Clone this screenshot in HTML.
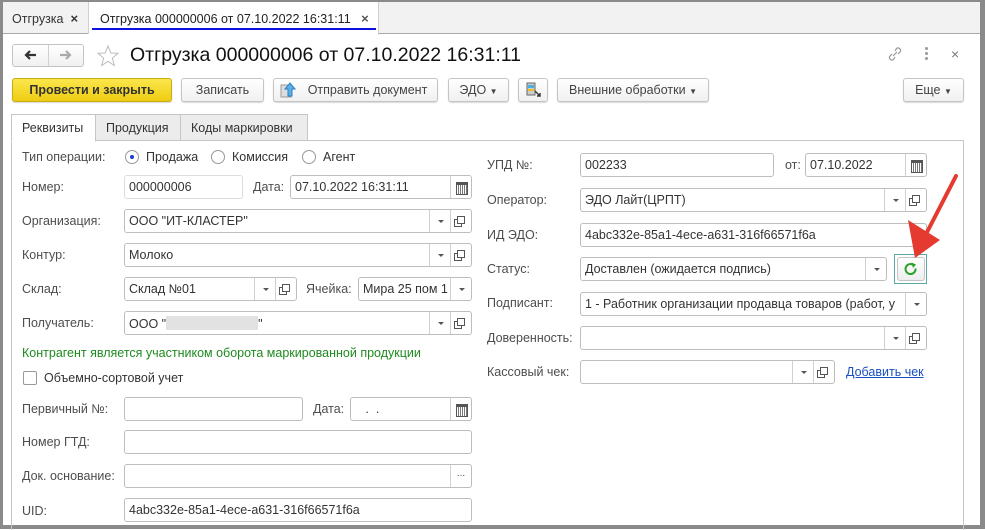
<!DOCTYPE html><html><head><meta charset="utf-8"><style>
*{box-sizing:border-box;margin:0;padding:0}
body{width:985px;height:529px;overflow:hidden;background:#fff;font-family:"Liberation Sans",Arial,sans-serif;font-size:12.5px;color:#333;position:relative}
.a{position:absolute;white-space:nowrap}
.l{position:absolute;color:#4d4d4d;font-size:12.5px;white-space:nowrap}
.f{position:absolute;border:1px solid #bdbdbd;border-radius:3px;background:#fff;height:24px;padding:4px 0 0 4px;color:#333;white-space:nowrap;overflow:hidden}
.sb{position:absolute;top:0;bottom:0;border-left:1px solid #d0d0d0;width:21px}
.dd::after{content:"";position:absolute;left:8px;top:10px;border:3px solid transparent;border-top:3px solid #555}
.op::after{content:"";position:absolute;left:6px;top:6px;width:6px;height:6px;border:1px solid #555;box-shadow:-3px 3px 0 -1px #fff,-3px 3px 0 0 #555}
.cal::after{content:"";position:absolute;left:5px;top:6px;width:10px;height:9px;border:1px solid #555;border-top-width:3px;background:repeating-linear-gradient(90deg,#fff 0 1px,#777 1px 2px)}
.btn{position:absolute;top:78px;height:24px;border:1px solid #c4c4c4;border-radius:3px;background:linear-gradient(#fff,#f0f0f0);box-shadow:0 1px 1px rgba(0,0,0,.15);color:#444;text-align:center;line-height:22px;font-size:12.5px}
.tab{position:absolute;top:114px;height:27px;border:1px solid #c6c6c6;background:#ececec;padding:6px 0 0 10px;color:#333}
.rad{position:absolute;width:14px;height:14px;border:1px solid #999;border-radius:50%;background:#fff}
</style></head><body>
<div class="a" style="left:0;top:0;width:985px;height:34px;background:#f2f2f2;border-bottom:1px solid #aaa"></div>
<div class="a" style="left:0;top:0;width:3px;height:529px;background:#8a8a8a"></div>
<div class="a" style="left:980px;top:0;width:5px;height:529px;background:#8a8a8a"></div>
<div class="a" style="left:0;top:525px;width:985px;height:4px;background:#8a8a8a"></div>
<div class="a" style="left:0;top:0;width:985px;height:2px;background:#8a8a8a"></div>
<div class="a" style="left:12px;top:11px;color:#333">Отгрузка&nbsp;&nbsp;<b style="font-size:13px">×</b></div>
<div class="a" style="left:88px;top:2px;width:1px;height:32px;background:#d0d0d0"></div>
<div class="a" style="left:89px;top:2px;width:290px;height:33px;background:#fff;border-right:1px solid #d0d0d0"></div>
<div class="a" style="left:100px;top:11px;color:#222">Отгрузка 000000006 от 07.10.2022 16:31:11&nbsp;&nbsp;&nbsp;<b style="font-size:13px;color:#555">×</b></div>
<div class="a" style="left:92px;top:28px;width:284px;height:2px;background:#1010e0"></div>
<div class="a" style="left:12px;top:44px;width:72px;height:23px;border:1px solid #c4c4c4;border-radius:3px;background:linear-gradient(#fff,#f0f0f0)"></div>
<div class="a" style="left:48px;top:45px;width:1px;height:21px;background:#d0d0d0"></div>
<svg class="a" style="left:22px;top:48px" width="16" height="14"><path d="M14 7 H4 M8 3 L4 7 L8 11" fill="none" stroke="#333" stroke-width="2.2"/></svg>
<svg class="a" style="left:58px;top:48px" width="16" height="14"><path d="M2 7 H12 M8 3 L12 7 L8 11" fill="none" stroke="#aaa" stroke-width="2.2"/></svg>
<svg class="a" style="left:96px;top:44px" width="24" height="24"><polygon points="12,2 14.8,9 22,9.3 16.4,14 18.3,21.5 12,17.3 5.7,21.5 7.6,14 2,9.3 9.2,9" fill="none" stroke="#bbb"/></svg>
<div class="a" style="left:130px;top:44px;font-size:19.5px;color:#111">Отгрузка 000000006 от 07.10.2022 16:31:11</div>
<svg class="a" style="left:887px;top:46px" width="16" height="16"><path d="M6 10 L10 6 M5 8 L3 10 a2.5 2.5 0 0 0 3.5 3.5 L8 11 M11 8 L13 6 a2.5 2.5 0 0 0 -3.5 -3.5 L8 5" fill="none" stroke="#999" stroke-width="1.2"/></svg>
<div class="a" style="left:925px;top:47px;width:3px;height:3px;border-radius:50%;background:#999;box-shadow:0 5px 0 #999,0 10px 0 #999"></div>
<div class="a" style="left:951px;top:46px;color:#777;font-size:14px">×</div>
<div class="btn" style="left:12px;width:160px;background:linear-gradient(#fbe64b,#efcc12);border-color:#c9ac10;font-weight:bold;color:#333">Провести и закрыть</div>
<div class="btn" style="left:181px;width:83px">Записать</div>
<div class="btn" style="left:273px;width:165px;padding-left:24px">Отправить документ</div>
<svg class="a" style="left:280px;top:82px" width="16" height="16"><rect x="1" y="3" width="10" height="12" fill="#ddd" stroke="#999"/><path d="M8 14 V7 H5 L10 1 L15 7 H12 V14Z" fill="#5ab0e8" stroke="#2c7fc0"/></svg>
<div class="btn" style="left:448px;width:61px">ЭДО <span style="font-size:8px">▼</span></div>
<div class="btn" style="left:518px;width:30px"></div>
<svg class="a" style="left:524px;top:81px" width="18" height="18"><rect x="3" y="2" width="8" height="12" fill="#ccc" stroke="#666"/><rect x="4" y="4" width="6" height="3" fill="#4ab0ea"/><rect x="4" y="8" width="6" height="2" fill="#f0c020"/><path d="M11 10 L16 15 M16 12 V15 H13" stroke="#333" fill="none" stroke-width="1.4"/></svg>
<div class="btn" style="left:557px;width:152px">Внешние обработки <span style="font-size:8px">▼</span></div>
<div class="btn" style="left:903px;width:61px">Еще <span style="font-size:8px">▼</span></div>
<div class="a" style="left:11px;top:140px;width:953px;height:390px;border:1px solid #c6c6c6;border-bottom:none"></div>
<div class="tab" style="left:95px;width:86px">Продукция</div>
<div class="tab" style="left:180px;width:128px">Коды маркировки</div>
<div class="tab" style="left:11px;width:85px;background:#fff;border-bottom-color:#fff;height:28px">Реквизиты</div>
<div class="l" style="left:22px;top:150px">Тип операции:</div>
<div class="rad" style="left:125px;top:150px"><div style="position:absolute;left:4px;top:4px;width:4px;height:4px;border-radius:50%;background:#1a3fd8"></div></div>
<div class="a" style="left:146px;top:150px">Продажа</div>
<div class="rad" style="left:211px;top:150px"></div>
<div class="a" style="left:232px;top:150px">Комиссия</div>
<div class="rad" style="left:302px;top:150px"></div>
<div class="a" style="left:323px;top:150px">Агент</div>
<div class="l" style="left:22px;top:180px">Номер:</div>
<div class="f" style="left:124px;top:175px;width:119px;border-color:#ddd">000000006</div>
<div class="l" style="left:253px;top:180px">Дата:</div>
<div class="f" style="left:290px;top:175px;width:182px">07.10.2022 16:31:11<div class="sb cal" style="right:0;background:#fff"></div></div>
<div class="l" style="left:22px;top:214px">Организация:</div>
<div class="f" style="left:124px;top:209px;width:348px">ООО "ИТ-КЛАСТЕР"<div class="sb dd" style="right:21px"></div><div class="sb op" style="right:0"></div></div>
<div class="l" style="left:22px;top:248px">Контур:</div>
<div class="f" style="left:124px;top:243px;width:348px">Молоко<div class="sb dd" style="right:21px"></div><div class="sb op" style="right:0"></div></div>
<div class="l" style="left:22px;top:282px">Склад:</div>
<div class="f" style="left:124px;top:277px;width:173px">Склад №01<div class="sb dd" style="right:21px"></div><div class="sb op" style="right:0"></div></div>
<div class="l" style="left:306px;top:282px">Ячейка:</div>
<div class="f" style="left:358px;top:277px;width:114px">Мира 25 пом 1<div class="sb dd" style="right:0;background:#fff"></div></div>
<div class="l" style="left:22px;top:316px">Получатель:</div>
<div class="f" style="left:124px;top:311px;width:348px">ООО "<span style="display:inline-block;width:92px;height:14px;background:#e2e2e2;vertical-align:-2px"></span>"<div class="sb dd" style="right:21px"></div><div class="sb op" style="right:0"></div></div>
<div class="a" style="left:22px;top:346px;color:#1f8a1f">Контрагент является участником оборота маркированной продукции</div>
<div class="a" style="left:23px;top:371px;width:14px;height:14px;border:1px solid #999;border-radius:2px"></div>
<div class="a" style="left:44px;top:371px">Объемно-сортовой учет</div>
<div class="l" style="left:22px;top:402px">Первичный №:</div>
<div class="f" style="left:124px;top:397px;width:179px"></div>
<div class="l" style="left:313px;top:402px">Дата:</div>
<div class="f" style="left:350px;top:397px;width:122px">&nbsp;&nbsp;&nbsp;.&nbsp;&nbsp;.<div class="sb cal" style="right:0"></div></div>
<div class="l" style="left:22px;top:435px">Номер ГТД:</div>
<div class="f" style="left:124px;top:430px;width:348px"></div>
<div class="l" style="left:22px;top:469px">Док. основание:</div>
<div class="f" style="left:124px;top:464px;width:348px"><div class="sb" style="right:0;color:#555;text-align:center;font-size:10px;padding-top:3px">...</div></div>
<div class="l" style="left:22px;top:504px">UID:</div>
<div class="f" style="left:124px;top:498px;width:348px">4abc332e-85a1-4ece-a631-316f66571f6a</div>
<div class="l" style="left:487px;top:158px">УПД №:</div>
<div class="f" style="left:580px;top:153px;width:194px">002233</div>
<div class="l" style="left:785px;top:158px">от:</div>
<div class="f" style="left:805px;top:153px;width:122px">07.10.2022<div class="sb cal" style="right:0"></div></div>
<div class="l" style="left:487px;top:193px">Оператор:</div>
<div class="f" style="left:580px;top:188px;width:347px">ЭДО Лайт(ЦРПТ)<div class="sb dd" style="right:21px"></div><div class="sb op" style="right:0"></div></div>
<div class="l" style="left:487px;top:228px">ИД ЭДО:</div>
<div class="f" style="left:580px;top:223px;width:347px">4abc332e-85a1-4ece-a631-316f66571f6a</div>
<div class="l" style="left:487px;top:262px">Статус:</div>
<div class="f" style="left:580px;top:257px;width:307px">Доставлен (ожидается подпись)<div class="sb dd" style="right:0"></div></div>
<div class="a" style="left:894px;top:254px;width:33px;height:30px;border:1px solid #5aa8a8"></div>
<div class="a" style="left:897px;top:257px;width:28px;height:24px;border:1px solid #c4c4c4;border-radius:3px;background:linear-gradient(#fff,#eee)"></div>
<svg class="a" style="left:903px;top:261px" width="16" height="16"><path d="M12.5 7.5 A5 5 0 1 1 10.5 4" fill="none" stroke="#2aa02a" stroke-width="2"/><path d="M8.5 1.5 L13 3.5 L10 7Z" fill="#2aa02a"/></svg>
<div class="l" style="left:487px;top:296px">Подписант:</div>
<div class="f" style="left:580px;top:292px;width:347px">1 - Работник организации продавца товаров (работ, у<div class="sb dd" style="right:0;background:#fff"></div></div>
<div class="l" style="left:487px;top:331px">Доверенность:</div>
<div class="f" style="left:580px;top:326px;width:347px"><div class="sb dd" style="right:21px"></div><div class="sb op" style="right:0"></div></div>
<div class="l" style="left:487px;top:365px">Кассовый чек:</div>
<div class="f" style="left:580px;top:360px;width:255px"><div class="sb dd" style="right:21px"></div><div class="sb op" style="right:0"></div></div>
<div class="a" style="left:846px;top:365px;color:#1a4fc0;text-decoration:underline">Добавить чек</div>
<svg class="a" style="left:900px;top:170px" width="70" height="95"><line x1="56" y1="6" x2="24" y2="68" stroke="#e53a2f" stroke-width="4" stroke-linecap="round"/><polygon points="15,88 8,50 40,70" fill="#e53a2f"/></svg>
</body></html>
